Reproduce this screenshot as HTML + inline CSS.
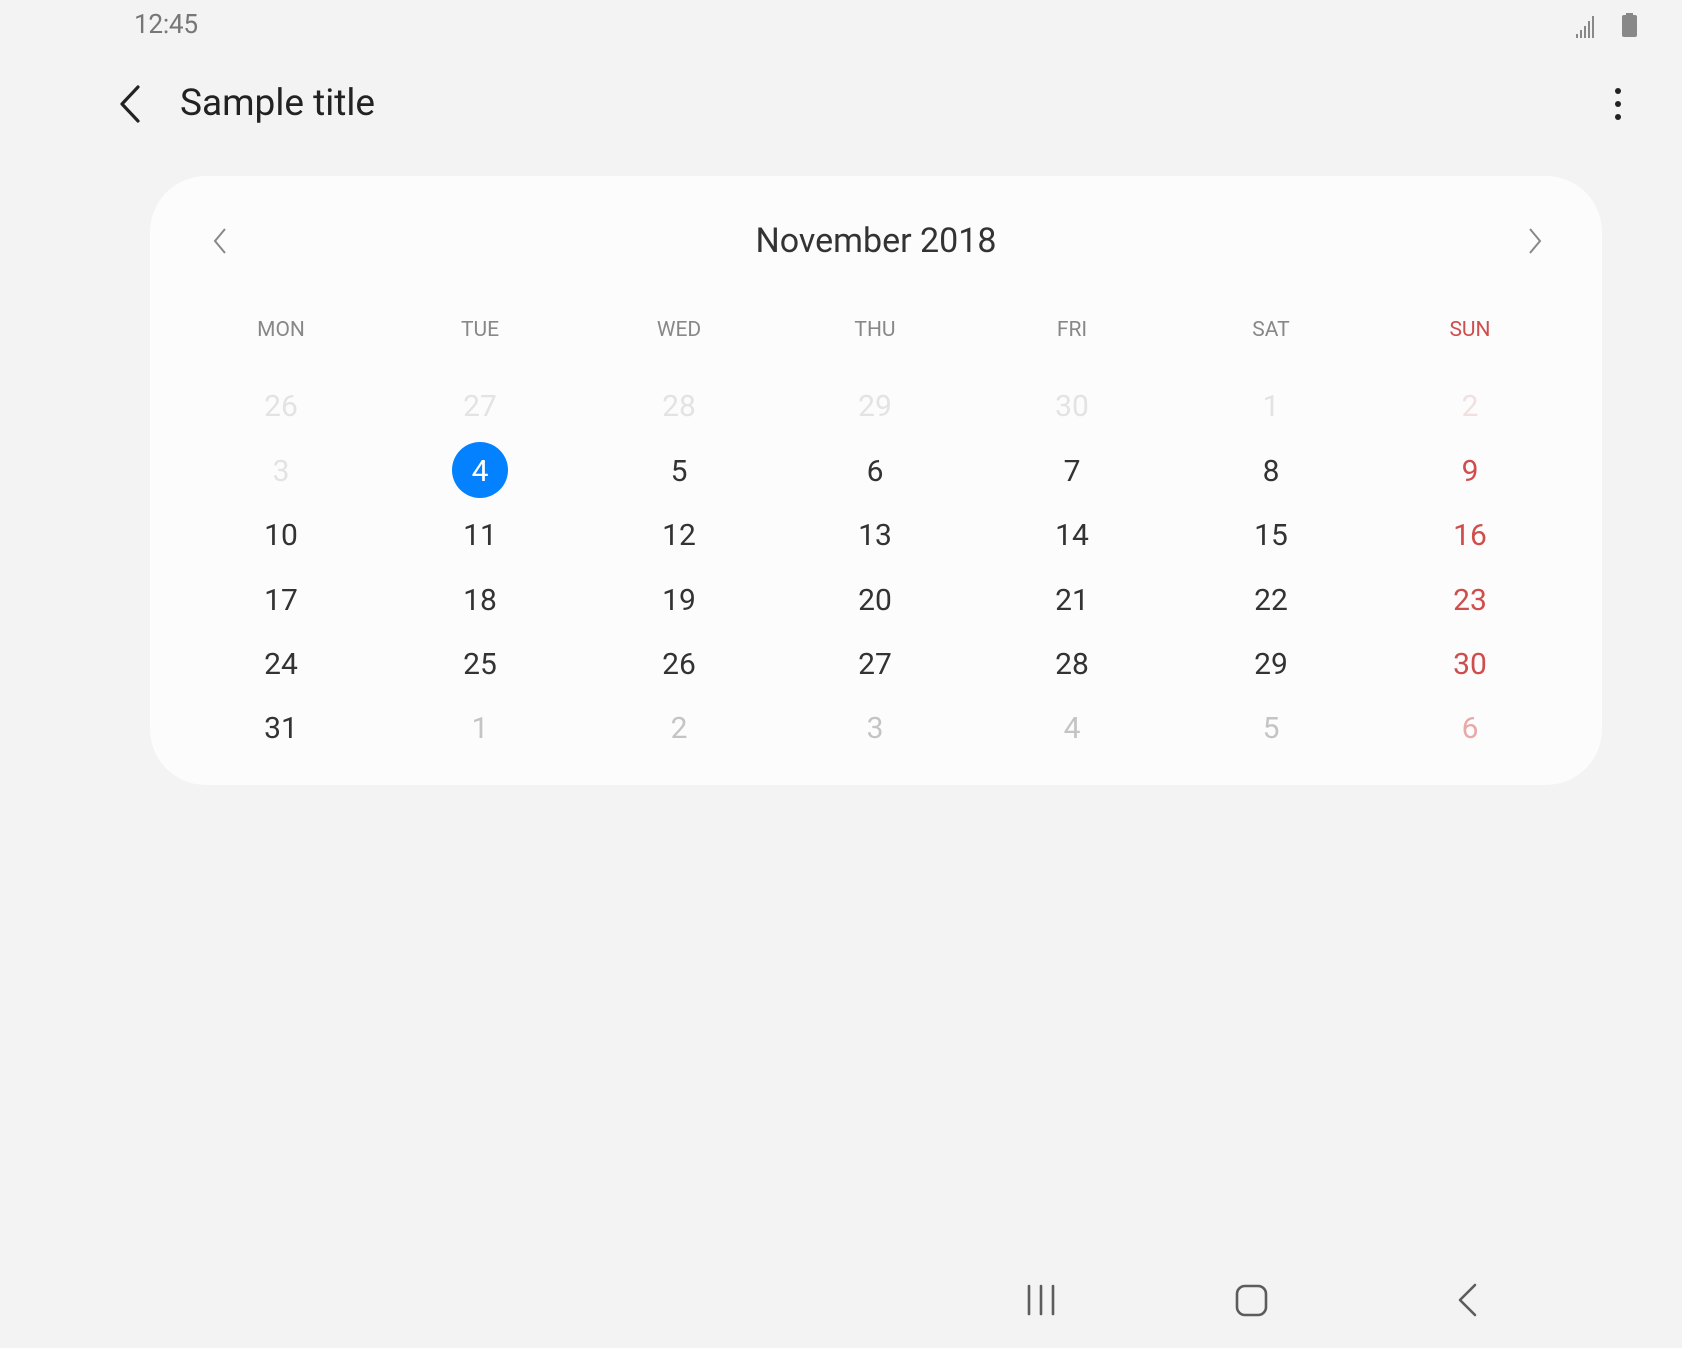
<!DOCTYPE html>
<html><head><meta charset="utf-8"><style>
*{margin:0;padding:0;box-sizing:border-box}
body{width:1682px;height:1348px;background:#f3f3f3;font-family:Roboto,"Liberation Sans",sans-serif;position:relative;overflow:hidden}
.a{position:absolute}
.time{left:134px;top:8px;font-size:27px;color:#777;letter-spacing:-0.3px;transform:scaleX(.97);transform-origin:left}
.title{left:180px;top:82px;font-size:37px;color:#222}
.card{left:150px;top:176px;width:1452px;height:609px;background:#fcfcfc;border-radius:56px}
.month{left:0;width:1752px;top:221px;text-align:center;font-size:34px;color:#333}
.c{position:absolute;width:120px;margin-left:-60px;text-align:center}
.lab{font-size:21px;color:#888;top:318px}
.d{font-size:30px;color:#333;line-height:40px}
.dim{color:#e3e3e3}.nx{color:#c4c4c4}.r{color:#cf4d4d}.rd{color:#f2e0e0}.rn{color:#e8a9a9}
</style></head><body>
<div class="a time">12:45</div>
<svg class="a" style="left:1572px;top:12px" width="70" height="28">
<g fill="#888"><rect x="4" y="22" width="2" height="4"/><rect x="8" y="18" width="2" height="8"/><rect x="12" y="14" width="2" height="12"/><rect x="16" y="9" width="2" height="17"/><rect x="20" y="4" width="2" height="22"/>
<rect x="50" y="3" width="15" height="22" rx="2"/><rect x="54" y="1" width="7" height="3"/></g></svg>
<svg class="a" style="left:110px;top:82px" width="40" height="44"><path d="M28 5 L12 22 L28 39" fill="none" stroke="#222" stroke-width="3.2" stroke-linecap="round" stroke-linejoin="round"/></svg>
<div class="a title">Sample title</div>
<svg class="a" style="left:1610px;top:86px" width="16" height="36"><g fill="#222"><circle cx="8" cy="5" r="3"/><circle cx="8" cy="18" r="3"/><circle cx="8" cy="31" r="3"/></g></svg>
<div class="a card"></div>
<div class="a month">November 2018</div>
<svg class="a" style="left:210px;top:226px" width="20" height="30"><path d="M15 3 L5 15 L15 27" fill="none" stroke="#888" stroke-width="2"/></svg>
<svg class="a" style="left:1525px;top:226px" width="20" height="30"><path d="M5 3 L15 15 L5 27" fill="none" stroke="#888" stroke-width="2"/></svg>
<div class="a" style="left:452px;top:442px;width:56px;height:56px;border-radius:50%;background:#0381fe"></div>
<div id="g"></div>
<script>
var xs=[281,480,679,875,1072,1271,1470],ys=[407,472,536,601,665,729];
var labs=["MON","TUE","WED","THU","FRI","SAT","SUN"],h="";
labs.forEach(function(l,i){h+='<div class="c lab'+(i==6?' r':'')+'" style="left:'+xs[i]+'px">'+l+'</div>';});
var rows=[[26,27,28,29,30,1,2],[3,4,5,6,7,8,9],[10,11,12,13,14,15,16],[17,18,19,20,21,22,23],[24,25,26,27,28,29,30],[31,1,2,3,4,5,6]];
rows.forEach(function(r,ri){r.forEach(function(v,ci){var cl="";
if(ri==0||(ri==1&&ci==0))cl=ci==6?"rd":"dim";else if(ri==5&&ci>0)cl=ci==6?"rn":"nx";else if(ci==6)cl="r";
var st="left:"+xs[ci]+"px;top:"+(ys[ri]-20)+"px";if(ri==1&&ci==1)st+=";color:#fff";
h+='<div class="c d '+cl+'" style="'+st+'">'+v+'</div>';});});
document.getElementById("g").innerHTML=h;
</script>
<svg class="a" style="left:1017px;top:1278px" width="470" height="44">
<g fill="none" stroke="#5c5c5c" stroke-width="2.6" stroke-linecap="round">
<path d="M12 8V36M24 8V36M36 8V36"/>
<rect x="220" y="8" width="29" height="29" rx="8"/>
<path d="M458 7 L443 22 L458 37" stroke-linejoin="round"/></g></svg>
</body></html>
